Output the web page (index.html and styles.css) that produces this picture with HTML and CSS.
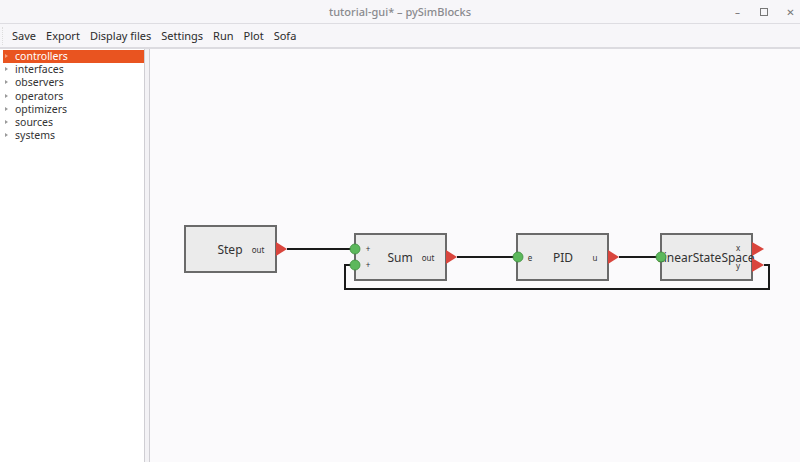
FILE: index.html
```html
<!DOCTYPE html>
<html lang="en">
<head>
  <meta charset="UTF-8" />
  <title>tutorial-gui* – pySimBlocks</title>
  <link rel="stylesheet" href="styles.css">
</head>
<body>
  <!-- barra de titulo de la ventana -->
  <div class="titlebar">
    <div></div>
    <div class="title">tutorial-gui* – pySimBlocks</div>
    <div class="controls">
      <span class="ctl">–</span>
      <span class="ctl box"></span>
      <span class="ctl">✕</span>
    </div>
  </div>

  <div class="menubar">
    <span class="grip"></span>
    <span class="item">Save</span>
    <span class="item">Export</span>
    <span class="item">Display files</span>
    <span class="item">Settings</span>
    <span class="item">Run</span>
    <span class="item">Plot</span>
    <span class="item">Sofa</span>
  </div>

  <div class="main">
    <ul class="tree">
      <li class="selected"><span class="arrow"></span>controllers</li>
      <li><span class="arrow"></span>interfaces</li>
      <li><span class="arrow"></span>observers</li>
      <li><span class="arrow"></span>operators</li>
      <li><span class="arrow"></span>optimizers</li>
      <li><span class="arrow"></span>sources</li>
      <li><span class="arrow"></span>systems</li>
    </ul>
    <div class="splitter"></div>
    <div class="canvas">
      <!-- diagrama: coordenadas relativas al lienzo (150, 49) -->
      <svg class="diagram" width="650" height="413" viewBox="0 0 650 413">
        <g class="wires">
          <line x1="137" y1="200" x2="205" y2="200" />
          <line x1="307" y1="208" x2="368" y2="208" />
          <line x1="469" y1="208" x2="511" y2="208" />
          <polyline points="614,216 619,216 619,240 195,240 195,216 205,216" />
        </g>

        <g class="block">
          <rect x="35" y="177" width="91" height="46" />
          <text x="80" y="205" class="name">Step</text>
          <text x="108" y="204" class="port">out</text>
          <polygon class="out" points="126,193 137,200 126,207" />
        </g>

        <g class="block">
          <rect x="205" y="185" width="91" height="46" />
          <text x="250" y="213" class="name">Sum</text>
          <text x="278" y="212" class="port">out</text>
          <text x="218" y="203" class="port">+</text>
          <text x="218" y="219" class="port">+</text>
          <circle class="in" cx="205" cy="200" r="5" />
          <circle class="in" cx="205" cy="216" r="5" />
          <polygon class="out" points="296,201 307,208 296,215" />
        </g>

        <g class="block">
          <rect x="367" y="185" width="91" height="46" />
          <text x="413" y="213" class="name">PID</text>
          <text x="380" y="212" class="port">e</text>
          <text x="445" y="212" class="port">u</text>
          <circle class="in" cx="368" cy="208" r="5" />
          <polygon class="out" points="458,201 469,208 458,215" />
        </g>

        <g class="block">
          <rect x="511" y="185" width="91" height="46" />
          <text x="556" y="213" class="name">LinearStateSpace</text>
          <text x="588" y="202" class="port">x</text>
          <text x="588" y="220" class="port">y</text>
          <circle class="in" cx="511" cy="208" r="5" />
          <polygon class="out" points="602,193 614,200 602,207" />
          <polygon class="out" points="602,209 614,216 602,223" />
        </g>
      </svg>
    </div>
  </div>
</body>
</html>
```

FILE: styles.css
```css
body {
  margin: 0;
  width: 800px;
  height: 462px;
  overflow: hidden;
  font-family: "Noto Sans", "DejaVu Sans", sans-serif;
  background: #f8f7fa;
  color: #2e2e2e;
}

.titlebar {
  display: grid;
  grid-template-columns: 1fr auto 1fr;
  align-items: center;
  height: 23px;
  border-bottom: 1px solid #dedde2;
  background: #f7f6f9;
}

.title {
  font-size: 11px;
  font-weight: 500;
  color: #8a8a8e;
}

.controls {
  display: flex;
  justify-content: flex-end;
  align-items: center;
  gap: 16px;
  padding-right: 5px;
}

.ctl {
  width: 9px;
  text-align: center;
  font-size: 10px;
  color: #777;
}

.ctl.box {
  width: 6px;
  height: 6px;
  border: 1px solid #777;
  margin: 0 2px;
}

.menubar {
  display: flex;
  align-items: center;
  height: 23px;
  padding-left: 2px;
  border-bottom: 2px solid #dcdbe0;
  background: #f7f6f9;
  font-size: 11px;
}

.grip {
  width: 3px;
  height: 18px;
  margin-right: 6px;
  border-left: 1px dotted #ddd;
}

.item {
  margin-right: 10px;
  color: #2b2b2b;
}

.main {
  display: flex;
  height: 414px;
}

.tree {
  list-style: none;
  margin: 0;
  padding: 1px 0 0 3px;
  width: 141px;
  background: #fff;
  border-right: 1px solid #cfced3;
  font-size: 10.5px;
}

.tree li {
  position: relative;
  height: 13.2px;
  line-height: 13px;
  padding-left: 12px;
  color: #333;
}

.tree li.selected {
  background: #e95420;
  color: #fff;
}

.arrow {
  position: absolute;
  left: 2px;
  top: 4px;
  border-left: 3px solid #9a9a9a;
  border-top: 2.5px solid transparent;
  border-bottom: 2.5px solid transparent;
}

.selected .arrow {
  border-left-color: #f3a080;
}

.splitter {
  width: 4px;
  background: #f3f2f5;
  border-right: 1px solid #cfced3;
}

.canvas {
  flex: 1;
  background: #fbfafc;
}

.diagram {
  display: block;
}

.wires line,
.wires polyline {
  stroke: #1a1a1a;
  stroke-width: 2;
  fill: none;
}

.block rect {
  fill: #ebebeb;
  stroke: #6a6a6a;
  stroke-width: 2;
}

.block text {
  font-family: "Noto Sans", "DejaVu Sans", sans-serif;
  fill: #333;
  text-anchor: middle;
}

.block .name {
  font-size: 12px;
}

.block .port {
  font-size: 8px;
}

.in {
  fill: #5cb85c;
  stroke: #3e8e3e;
  stroke-width: 0.8;
}

.out {
  fill: #d9453d;
}
```
